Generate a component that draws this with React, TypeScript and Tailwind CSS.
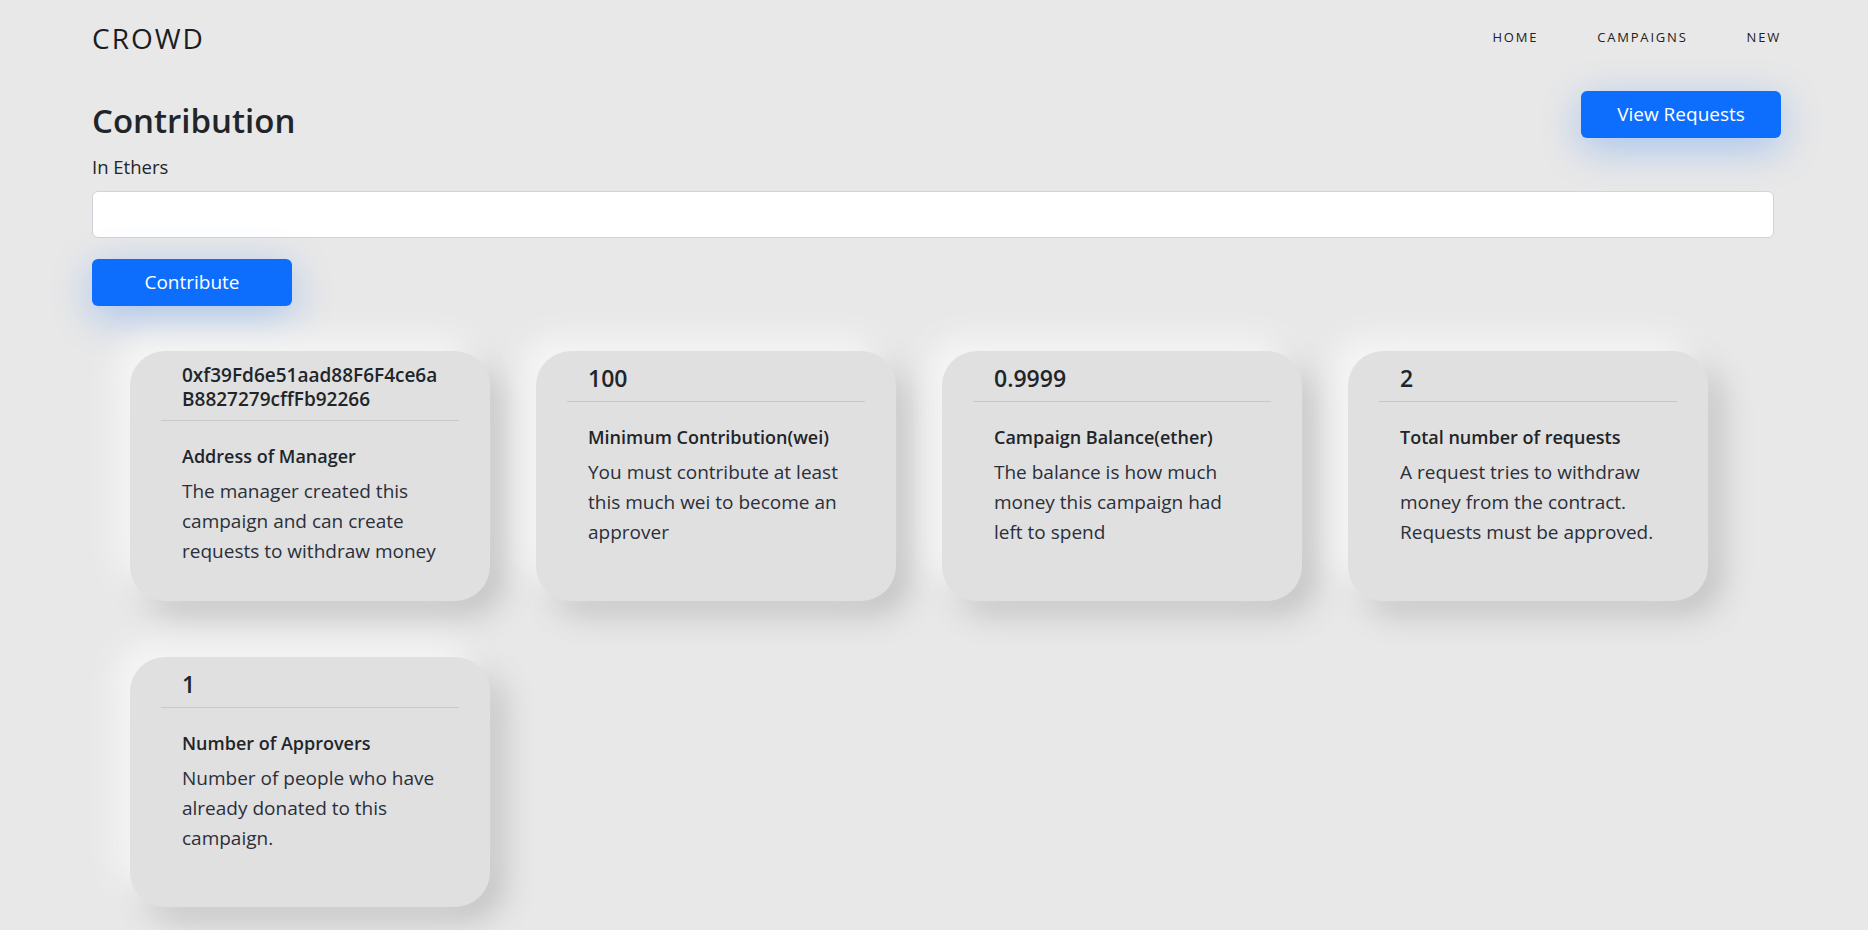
import React from 'react';

interface StatCardProps {
  header: string;
  meta: string;
  description: string;
  wide?: boolean;
}

const stats: StatCardProps[] = [
  {
    header: '0xf39Fd6e51aad88F6F4ce6aB8827279cffFb92266',
    meta: 'Address of Manager',
    description: 'The manager created this campaign and can create requests to withdraw money',
    wide: true,
  },
  {
    header: '100',
    meta: 'Minimum Contribution(wei)',
    description: 'You must contribute at least this much wei to become an approver',
  },
  {
    header: '0.9999',
    meta: 'Campaign Balance(ether)',
    description: 'The balance is how much money this campaign had left to spend',
  },
  {
    header: '2',
    meta: 'Total number of requests',
    description: 'A request tries to withdraw money from the contract. Requests must be approved.',
  },
  {
    header: '1',
    meta: 'Number of Approvers',
    description: 'Number of people who have already donated to this campaign.',
  },
];

const StatCard: React.FC<StatCardProps> = ({ header, meta, description, wide }) => {
  return (
    <div className="w-[360px] h-[250px] rounded-[35px] bg-[#e0e0e0] px-[31px] shadow-[-14px_-14px_30px_#f6f6f6,14px_14px_32px_#c2c2c2]">
      {/* Header */}
      <div className="border-b border-[#c8c8c8] px-[21px]">
        {wide ? (
          <div className="pt-[12px] pb-[9px] text-[19px] leading-[24px] font-semibold break-all">
            {header}
          </div>
        ) : (
          <div className="pt-[12px] pb-[8px] text-[23px] leading-[30px] font-semibold">{header}</div>
        )}
      </div>

      {/* Body */}
      <div className="px-[21px] pt-[21px]">
        <div className="text-[18px] leading-[28px] font-semibold">{meta}</div>
        <p className="mt-[6px] text-[19px] leading-[30px] text-[#2b2f3a]">{description}</p>
      </div>
    </div>
  );
};

export default function App() {
  return (
    <div
      className="min-h-screen bg-[#e8e8e8] text-[#212529] pl-[92px] pr-[87px]"
      style={{ fontFamily: '"Open Sans", "Noto Sans", sans-serif' }}
    >
      {/* Navbar */}
      <nav className="h-[76px] flex items-center justify-between">
        <a className="text-[28px] tracking-[2px] text-[#1a1d24]">CROWD</a>
        <div className="flex items-center gap-[59px] text-[13px] tracking-[1.8px] text-[#222]">
          <a>HOME</a>
          <a>CAMPAIGNS</a>
          <a>NEW</a>
        </div>
      </nav>

      {/* Contribution form */}
      <div className="flex items-start justify-between mt-[15px]">
        <h1 className="pt-[7px] text-[33px] leading-[46px] font-semibold">Contribution</h1>
        <button className="w-[200px] h-[47px] rounded-[6px] bg-[#0d6efd] text-white text-[19px] shadow-[0_10px_40px_rgba(13,110,253,0.3)]">
          View Requests
        </button>
      </div>
      <label className="block mt-[8px] text-[18.5px] leading-[30px]">In Ethers</label>
      <div className="mt-[9px] pr-[7px]">
        <input className="w-full h-[47px] rounded-[6px] border border-[#ced4da] bg-white px-3 outline-none" />
      </div>
      <button className="mt-[21px] w-[200px] h-[47px] rounded-[6px] bg-[#0d6efd] text-white text-[19px] shadow-[0_10px_40px_rgba(13,110,253,0.3)]">
        Contribute
      </button>

      {/* Stats */}
      <div className="mt-[45px] ml-[38px] grid grid-cols-[repeat(4,360px)] gap-x-[46px] gap-y-[56px] pb-[40px]">
        {stats.map((s) => (
          <StatCard key={s.meta} {...s} />
        ))}
      </div>
    </div>
  );
}
